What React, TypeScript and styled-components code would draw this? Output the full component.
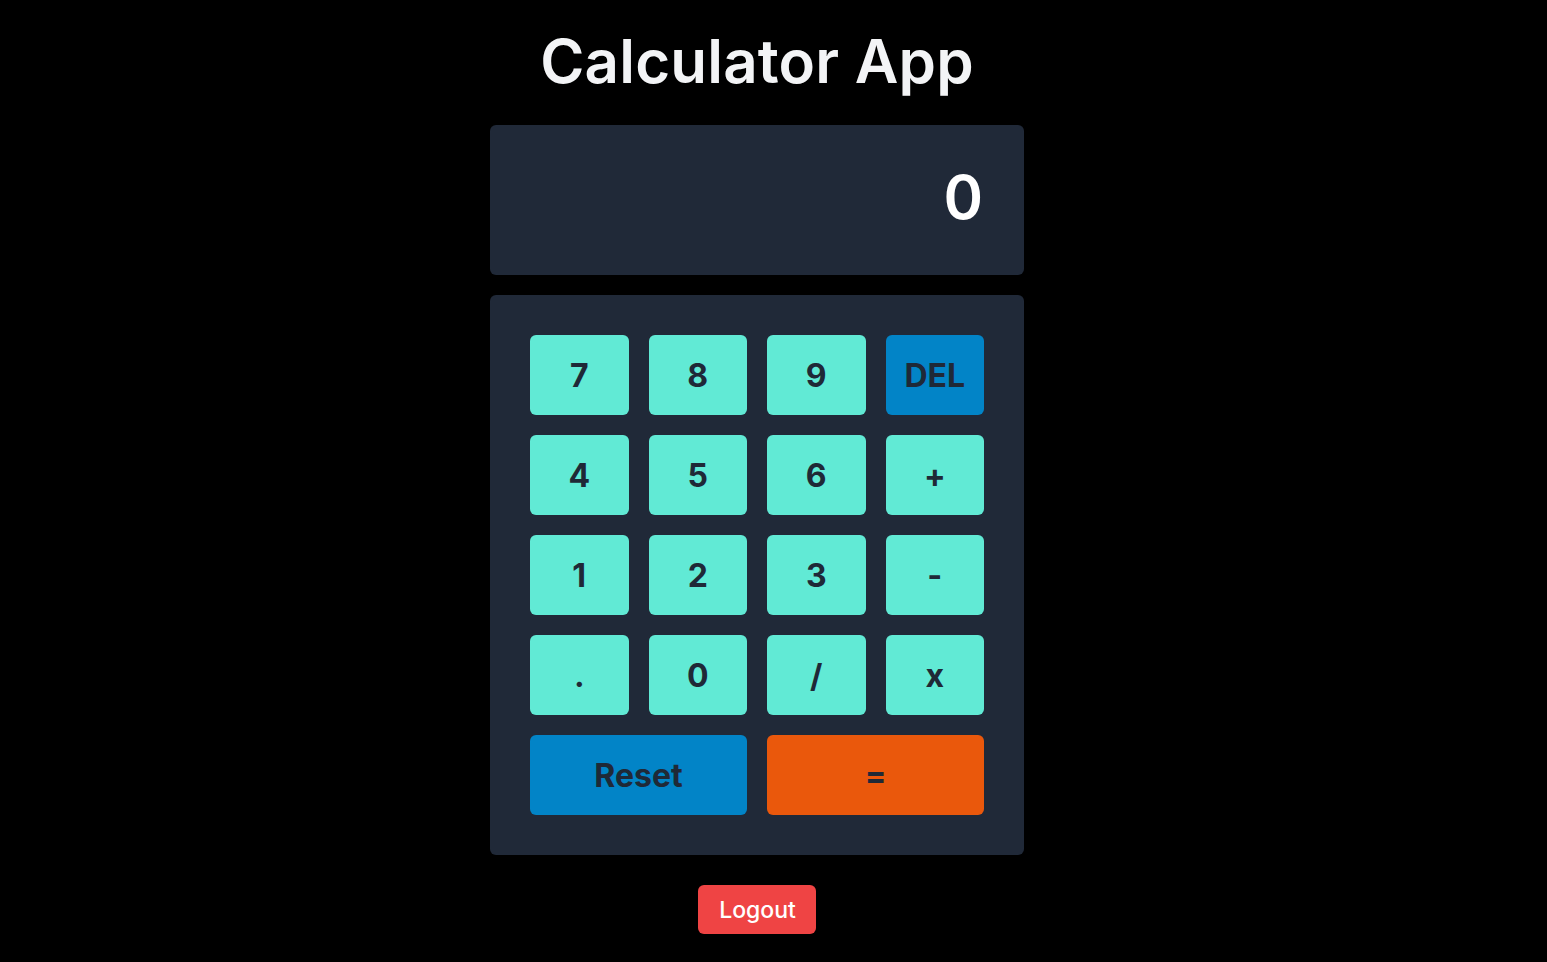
import React from "react";
import styled, { createGlobalStyle } from "styled-components";

const Global = createGlobalStyle`
  html, body { margin: 0; padding: 0; background: #000; }
  body { font-family: Inter, "Noto Sans", sans-serif; }
  * { box-sizing: border-box; }
`;

const Page = styled.div`
  min-height: 962px;
  display: flex;
  flex-direction: column;
  align-items: center;
  padding: 23px 33px 0 0;
`;

const Title = styled.h1`
  margin: 2px 0 28px;
  font-size: 60px;
  line-height: 72px;
  font-weight: 600;
  color: #f3f4f6;
  letter-spacing: 0.2px;
`;

const Display = styled.div`
  width: 534px;
  height: 150px;
  background: #202938;
  border-radius: 6px;
  display: flex;
  align-items: center;
  justify-content: flex-end;
  padding: 0 41px 6px;
  color: #fff;
  font-size: 60px;
  font-weight: 600;
`;

const Pad = styled.div`
  margin-top: 20px;
  width: 534px;
  background: #202938;
  border-radius: 6px;
  padding: 40px;
  display: grid;
  grid-template-columns: repeat(4, 1fr);
  grid-auto-rows: 80px;
  gap: 20px;
`;

const Key = styled.button<{ $bg: string; $span?: number }>`
  border: none;
  border-radius: 6px;
  background: ${(p) => p.$bg};
  grid-column: span ${(p) => p.$span ?? 1};
  color: #1f2937;
  font-family: Inter, "Noto Sans", sans-serif;
  font-size: 32px;
  font-weight: 700;
  display: flex;
  align-items: center;
  justify-content: center;
  padding: 0;
  cursor: pointer;
`;

const Logout = styled.button`
  margin-top: 30px;
  border: none;
  border-radius: 6px;
  background: #ef4444;
  color: #fff;
  font-family: Inter, "Noto Sans", sans-serif;
  font-size: 23px;
  font-weight: 500;
  height: 49px;
  padding: 0 20px 0 21px;
  cursor: pointer;
`;

const TEAL = "#61ead5";
const BLUE = "#0284c7";
const ORANGE = "#ea580c";

const keys: { label: string; bg: string; span?: number }[] = [
  { label: "7", bg: TEAL },
  { label: "8", bg: TEAL },
  { label: "9", bg: TEAL },
  { label: "DEL", bg: BLUE },
  { label: "4", bg: TEAL },
  { label: "5", bg: TEAL },
  { label: "6", bg: TEAL },
  { label: "+", bg: TEAL },
  { label: "1", bg: TEAL },
  { label: "2", bg: TEAL },
  { label: "3", bg: TEAL },
  { label: "-", bg: TEAL },
  { label: ".", bg: TEAL },
  { label: "0", bg: TEAL },
  { label: "/", bg: TEAL },
  { label: "x", bg: TEAL },
  { label: "Reset", bg: BLUE, span: 2 },
  { label: "=", bg: ORANGE, span: 2 },
];

export default function App() {
  return (
    <>
      <Global />
      <Page>
        <Title>Calculator App</Title>
        <Display>0</Display>
        <Pad>
          {keys.map((k) => (
            <Key key={k.label} $bg={k.bg} $span={k.span}>
              {k.label}
            </Key>
          ))}
        </Pad>
        <Logout>Logout</Logout>
      </Page>
    </>
  );
}
